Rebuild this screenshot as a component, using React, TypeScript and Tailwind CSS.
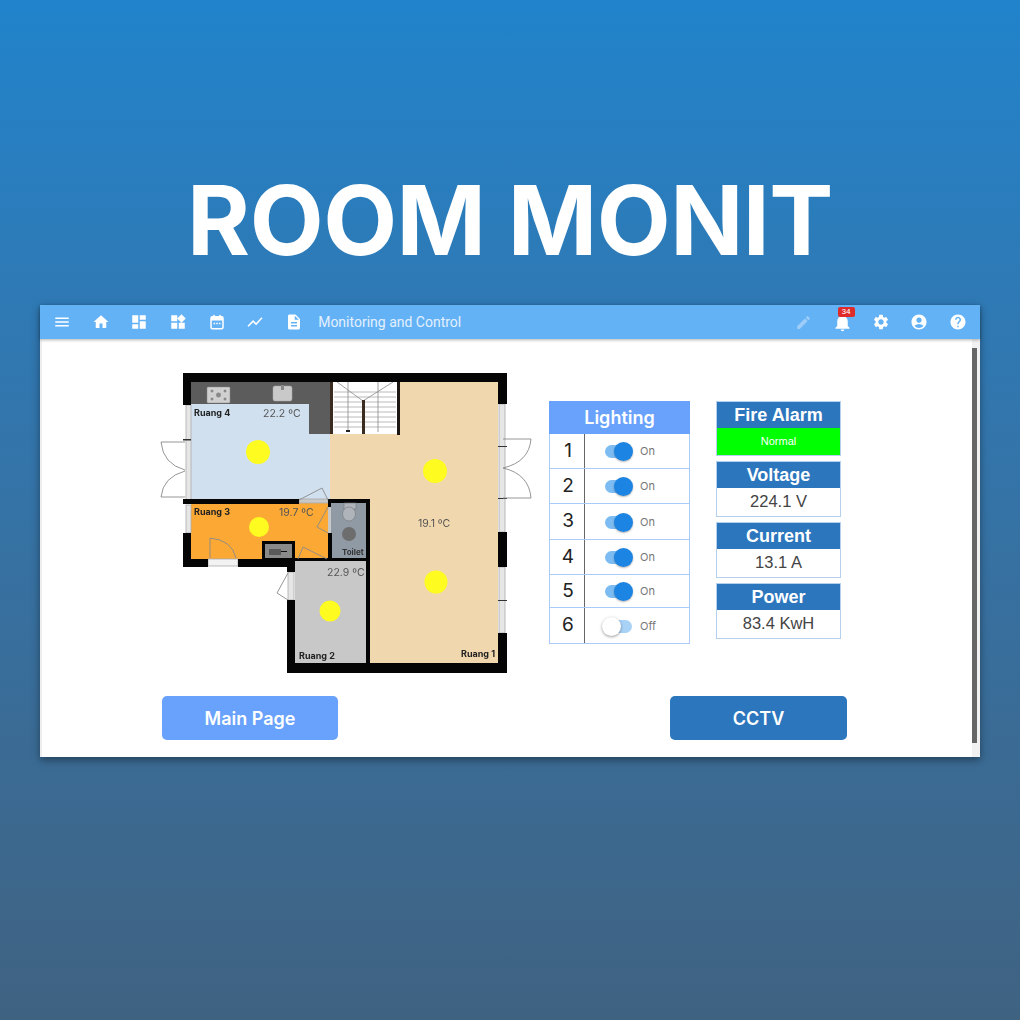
import { MdMenu, MdHome, MdDashboard, MdWidgets, MdShowChart, MdDescription, MdEdit, MdNotifications, MdSettings, MdAccountCircle, MdHelp } from "react-icons/md"
import type { ReactNode } from "react"

const CalendarIcon = () => (
  <svg width="18" height="18" viewBox="0 0 24 24" fill="none">
    <rect x="4" y="5" width="16" height="16" rx="2" stroke="white" strokeWidth="2" />
    <rect x="4" y="5" width="16" height="5" fill="white" />
    <rect x="7" y="2.5" width="2" height="4" fill="white" />
    <rect x="15" y="2.5" width="2" height="4" fill="white" />
    <rect x="7.5" y="13" width="2" height="2" fill="white" />
    <rect x="11" y="13" width="2" height="2" fill="white" />
    <rect x="14.5" y="13" width="2" height="2" fill="white" />
  </svg>
)

const ToolBtn = ({ children }: { children: ReactNode }) => (
  <div className="relative flex h-full w-[38.6px] items-center justify-center text-white">{children}</div>
)

const Toolbar = () => (
  <div className="z-10 flex h-[34px] items-center justify-between bg-[#64b2f6] px-[3px] shadow-[0_1px_3px_rgba(0,0,0,0.3)]">
    <div className="flex h-full items-center">
      <ToolBtn><MdMenu size={18} /></ToolBtn>
      <ToolBtn><MdHome size={18} /></ToolBtn>
      <ToolBtn><MdDashboard size={18} /></ToolBtn>
      <ToolBtn><MdWidgets size={18} /></ToolBtn>
      <ToolBtn><CalendarIcon /></ToolBtn>
      <ToolBtn><MdShowChart size={18} /></ToolBtn>
      <ToolBtn><MdDescription size={18} /></ToolBtn>
      <span className="ml-[5px] text-[14px] text-[#e3f0fd] [font-family:Roboto,sans-serif]">Monitoring and Control</span>
    </div>
    <div className="flex h-full items-center">
      <ToolBtn><MdEdit size={17} className="text-[#9dcdf8]" /></ToolBtn>
      <ToolBtn>
        <span className="ml-[1px] flex"><MdNotifications size={21} /></span>
        <span className="absolute left-[15px] top-[2px] flex h-[10px] w-[17px] items-center justify-center rounded-[2px] bg-[#e02b2b] text-[8px] leading-none text-white [font-family:Roboto,sans-serif]">34</span>
      </ToolBtn>
      <ToolBtn><MdSettings size={18} /></ToolBtn>
      <ToolBtn><MdAccountCircle size={18} /></ToolBtn>
      <ToolBtn><MdHelp size={18} /></ToolBtn>
    </div>
  </div>
)

const FloorPlan = () => (
  <svg width="372" height="306" viewBox="160 370 372 306" className="shrink-0 blur-[0.5px]">
    {/* rooms */}
    <rect x="330" y="382" width="168" height="282" fill="#f1d7ae" />
    <rect x="191" y="382" width="139" height="120" fill="#d0e0ef" />
    <rect x="191" y="503" width="139" height="56" fill="#fca835" />
    <rect x="331" y="503" width="36" height="56" fill="#8f9aa5" />
    <rect x="295" y="559" width="72" height="105" fill="#c8c8c8" />

    {/* kitchen */}
    <rect x="191" y="382" width="119" height="22" fill="#5c5c5c" />
    <rect x="309" y="382" width="21" height="52" fill="#5c5c5c" />
    <rect x="207" y="387" width="23" height="16" rx="1" fill="#cfcfcf" stroke="#888" strokeWidth="0.5" />
    <g fill="#8a8a8a" stroke="#eee" strokeWidth="0.6">
      <circle cx="212" cy="391" r="2" />
      <circle cx="225" cy="391" r="2" />
      <circle cx="212" cy="399" r="2" />
      <circle cx="225" cy="399" r="2" />
      <circle cx="218.5" cy="395" r="3" />
    </g>
    <rect x="273" y="386" width="19" height="15" rx="2" fill="#c9c9c9" stroke="#aaa" strokeWidth="0.5" />
    <rect x="281" y="385" width="3" height="5" fill="#888" />

    {/* stairs */}
    <rect x="333" y="382" width="64" height="52" fill="#ffffff" />
    <g stroke="#a8a8a8" strokeWidth="0.8">
      {[392, 397, 402, 407, 412, 417, 422, 427].map((y) => (
        <line key={y} x1="334" x2="396" y1={y} y2={y} />
      ))}
    </g>
    <g stroke="#888" strokeWidth="0.8" fill="none">
      <path d="M337 382L363 401L393 382" />
      <line x1="348" y1="382" x2="348" y2="432" />
      <line x1="378" y1="382" x2="378" y2="432" />
    </g>
    <rect x="346" y="430" width="4" height="2" fill="#222" />
    <rect x="330" y="382" width="3" height="52" fill="#3a2c20" />
    <rect x="397" y="382" width="3" height="53" fill="#1c1712" />
    <rect x="362" y="400" width="3" height="34" fill="#3a2c20" />

    {/* windows */}
    <g fill="#e6e6e6" stroke="#aaa" strokeWidth="0.8">
      <rect x="186" y="405" width="5" height="95" />
      <rect x="186" y="505" width="5" height="28" />
      <rect x="499" y="404" width="6" height="128" />
      <rect x="499" y="567" width="6" height="66" />
      <rect x="288" y="572" width="6" height="28" />
      <rect x="208" y="559" width="30" height="7" fill="#f2f2f2" />
      <rect x="299" y="499" width="29" height="4" fill="#c8c8c8" />
      <rect x="328" y="507" width="3" height="26" fill="#c8c8c8" stroke="none" />
    </g>
    <rect x="498" y="446" width="9" height="1" fill="#333" />
    <rect x="498" y="498" width="9" height="1" fill="#333" />
    <rect x="498" y="600" width="9" height="1" fill="#333" />
    <rect x="183" y="439" width="8" height="1.5" fill="#333" />

    {/* walls */}
    <g fill="#050505">
      <rect x="183" y="373" width="324" height="9" />
      <rect x="183" y="373" width="8" height="32" />
      <rect x="498" y="373" width="9" height="31" />
      <rect x="183" y="499" width="116" height="5" />
      <rect x="328" y="499" width="42" height="4" />
      <rect x="183" y="533" width="8" height="34" />
      <rect x="183" y="559" width="25" height="8" />
      <rect x="238" y="559" width="57" height="8" />
      <rect x="328" y="503" width="3" height="4" />
      <rect x="328" y="533" width="4" height="28" />
      <rect x="366" y="499" width="4" height="174" />
      <rect x="295" y="558" width="72" height="3" />
      <rect x="287" y="561" width="8" height="11" />
      <rect x="287" y="600" width="8" height="73" />
      <rect x="287" y="663" width="220" height="10" />
      <rect x="498" y="532" width="9" height="35" />
      <rect x="498" y="633" width="9" height="40" />
      <rect x="262" y="541" width="33" height="18" />
    </g>
    <rect x="265" y="544" width="27" height="14" fill="#8a8a8a" />
    <rect x="269" y="549" width="12" height="6" fill="#5a5a5a" />
    <rect x="281" y="551" width="6" height="1" fill="#111" />

    {/* toilet */}
    <rect x="344" y="503" width="12" height="6" fill="#aeb4ba" stroke="#777" strokeWidth="0.6" />
    <ellipse cx="349" cy="514" rx="6.5" ry="7" fill="#aeb4ba" stroke="#777" strokeWidth="0.6" />
    <circle cx="349" cy="534" r="7" fill="#6d6d6d" />

    {/* doors */}
    <g fill="none" stroke="#8a8a8a" strokeWidth="0.9">
      <path d="M185 442H161Q163 464 185 470" />
      <path d="M185 497H161Q163 477 185 471" />
      <path d="M503 439H531Q529 462 503 468" />
      <path d="M503 498H531Q529 474 503 468" />
      <path d="M299 500L322 488L328 500" />
      <path d="M328 507L317 527L328 533" />
      <path d="M210 558V538Q232 540 236 558" />
      <path d="M298 559L303 547L327 559" />
      <path d="M288 573L277 593L288 600" />
    </g>

    {/* lights */}
    <g fill="#fdfb20">
      <circle cx="258" cy="452" r="12" />
      <circle cx="259" cy="527" r="10" />
      <circle cx="435" cy="471" r="12" />
      <circle cx="436" cy="582" r="11.5" />
      <circle cx="330" cy="611" r="10.5" />
    </g>

    {/* labels */}
    <g fontFamily="Inter, sans-serif" fontSize="10.5" fill="#555">
      <text x="263" y="417">22.2 ºC</text>
      <text x="279" y="516">19.7 ºC</text>
      <text x="327" y="576">22.9 ºC</text>
      <text x="418" y="527">19.1 ºC</text>
    </g>
    <g fontFamily="Inter, sans-serif" fontSize="9" fontWeight="700" fill="#222">
      <text x="194" y="416">Ruang 4</text>
      <text x="194" y="515">Ruang 3</text>
      <text x="299" y="659">Ruang 2</text>
      <text x="461" y="657">Ruang 1</text>
      <text x="342" y="555" fontSize="8" fill="#333">Toilet</text>
    </g>
  </svg>
)

const lights = [
  { n: 1, on: true, h: "h-[35px]" },
  { n: 2, on: true, h: "h-[35px]" },
  { n: 3, on: true, h: "h-[36px]" },
  { n: 4, on: true, h: "h-[35px]" },
  { n: 5, on: true, h: "h-[33px]" },
  { n: 6, on: false, h: "h-[36px]" },
]

const LightingTable = () => (
  <div className="ml-[17px] mt-[62px] w-[141px] shrink-0 [font-family:Inter,sans-serif]">
    <div className="flex h-[33px] items-center justify-center bg-[#68a2fc] text-[18px] font-semibold text-white">Lighting</div>
    {lights.map((l) => (
      <div key={l.n} className={`flex border-x border-b border-[#a9cbf9] ${l.h}`}>
        <div className="flex w-[35px] items-center justify-center border-r border-[#666] pl-[2px] text-[19px] text-[#222]">{l.n}</div>
        <div className="flex flex-1 items-center pl-[20px] pt-[1px]">
          <div className="relative h-[13px] w-[27px]">
            <div className={l.on ? "h-full rounded-full bg-[#7dbcf2]" : "ml-[3px] h-full rounded-full bg-[#a9d2f7]"} />
            <div className={l.on
              ? "absolute left-[9px] top-[-3px] h-[19px] w-[19px] rounded-full bg-[#1c84e3] shadow-[0_1px_2px_rgba(0,0,0,0.3)]"
              : "absolute left-[-3px] top-[-3px] h-[19px] w-[19px] rounded-full bg-white shadow-[0_1px_3px_rgba(0,0,0,0.4)]"} />
          </div>
          <span className="ml-[8px] text-[11px] text-[#777]">{l.on ? "On" : "Off"}</span>
        </div>
      </div>
    ))}
  </div>
)

const InfoCard = ({ title, value, alarm }: { title: string; value: string; alarm?: boolean }) => (
  <div className={`${alarm ? "h-[55px]" : "h-[56px]"} border border-[#b5d0ec] [font-family:'Liberation_Sans',sans-serif]`}>
    <div className="flex h-[26px] items-center justify-center bg-[#2b76bd] text-[18px] font-bold text-white">{title}</div>
    {alarm ? (
      <div className="flex h-[27px] items-center justify-center bg-[#00ff00] text-[11px] text-white">{value}</div>
    ) : (
      <div className="flex h-[28px] items-center justify-center bg-white pb-[2px] text-[16.5px] text-[#444]">{value}</div>
    )}
  </div>
)

export default function App() {
  return (
    <div className="flex h-[1020px] w-[1020px] flex-col bg-gradient-to-b from-[#2083cb] to-[#3f6281]">
      <div className="flex h-[305px] justify-center pt-[172px]">
        <h1 className="text-[96px] font-bold leading-none tracking-[-0.5px] text-white [font-family:Inter,sans-serif]">ROOM MONIT</h1>
      </div>

      <div className="mx-[40px] flex h-[452px] flex-col bg-white shadow-[0_3px_8px_rgba(0,0,0,0.4)]">
        <Toolbar />
        <div className="flex flex-1 border-l-2 border-[#eeeeee]">
          <div className="flex-1">
            <div className="flex items-start pl-[118px]">
              <div className="pt-[31px]"><FloorPlan /></div>
              <LightingTable />
              <div className="ml-[26px] mt-[62px] flex w-[125px] shrink-0 flex-col gap-[5px]">
                <InfoCard title="Fire Alarm" value="Normal" alarm />
                <InfoCard title="Voltage" value="224.1 V" />
                <InfoCard title="Current" value="13.1 A" />
                <InfoCard title="Power" value="83.4 KwH" />
              </div>
            </div>
            <div className="ml-[120px] mt-[20px] flex w-[685px] justify-between [font-family:Inter,sans-serif]">
              <button className="h-[44px] w-[176px] rounded-[5px] bg-[#68a2fc] text-[18px] font-semibold text-white">Main Page</button>
              <button className="h-[44px] w-[177px] rounded-[5px] bg-[#2b76bd] text-[18px] font-semibold text-white">CCTV</button>
            </div>
          </div>
          <div className="w-[8px] bg-[#f1f1f1] pt-[9px]">
            <div className="h-[395px] w-[5px] bg-[#666]" />
          </div>
        </div>
      </div>
    </div>
  )
}
